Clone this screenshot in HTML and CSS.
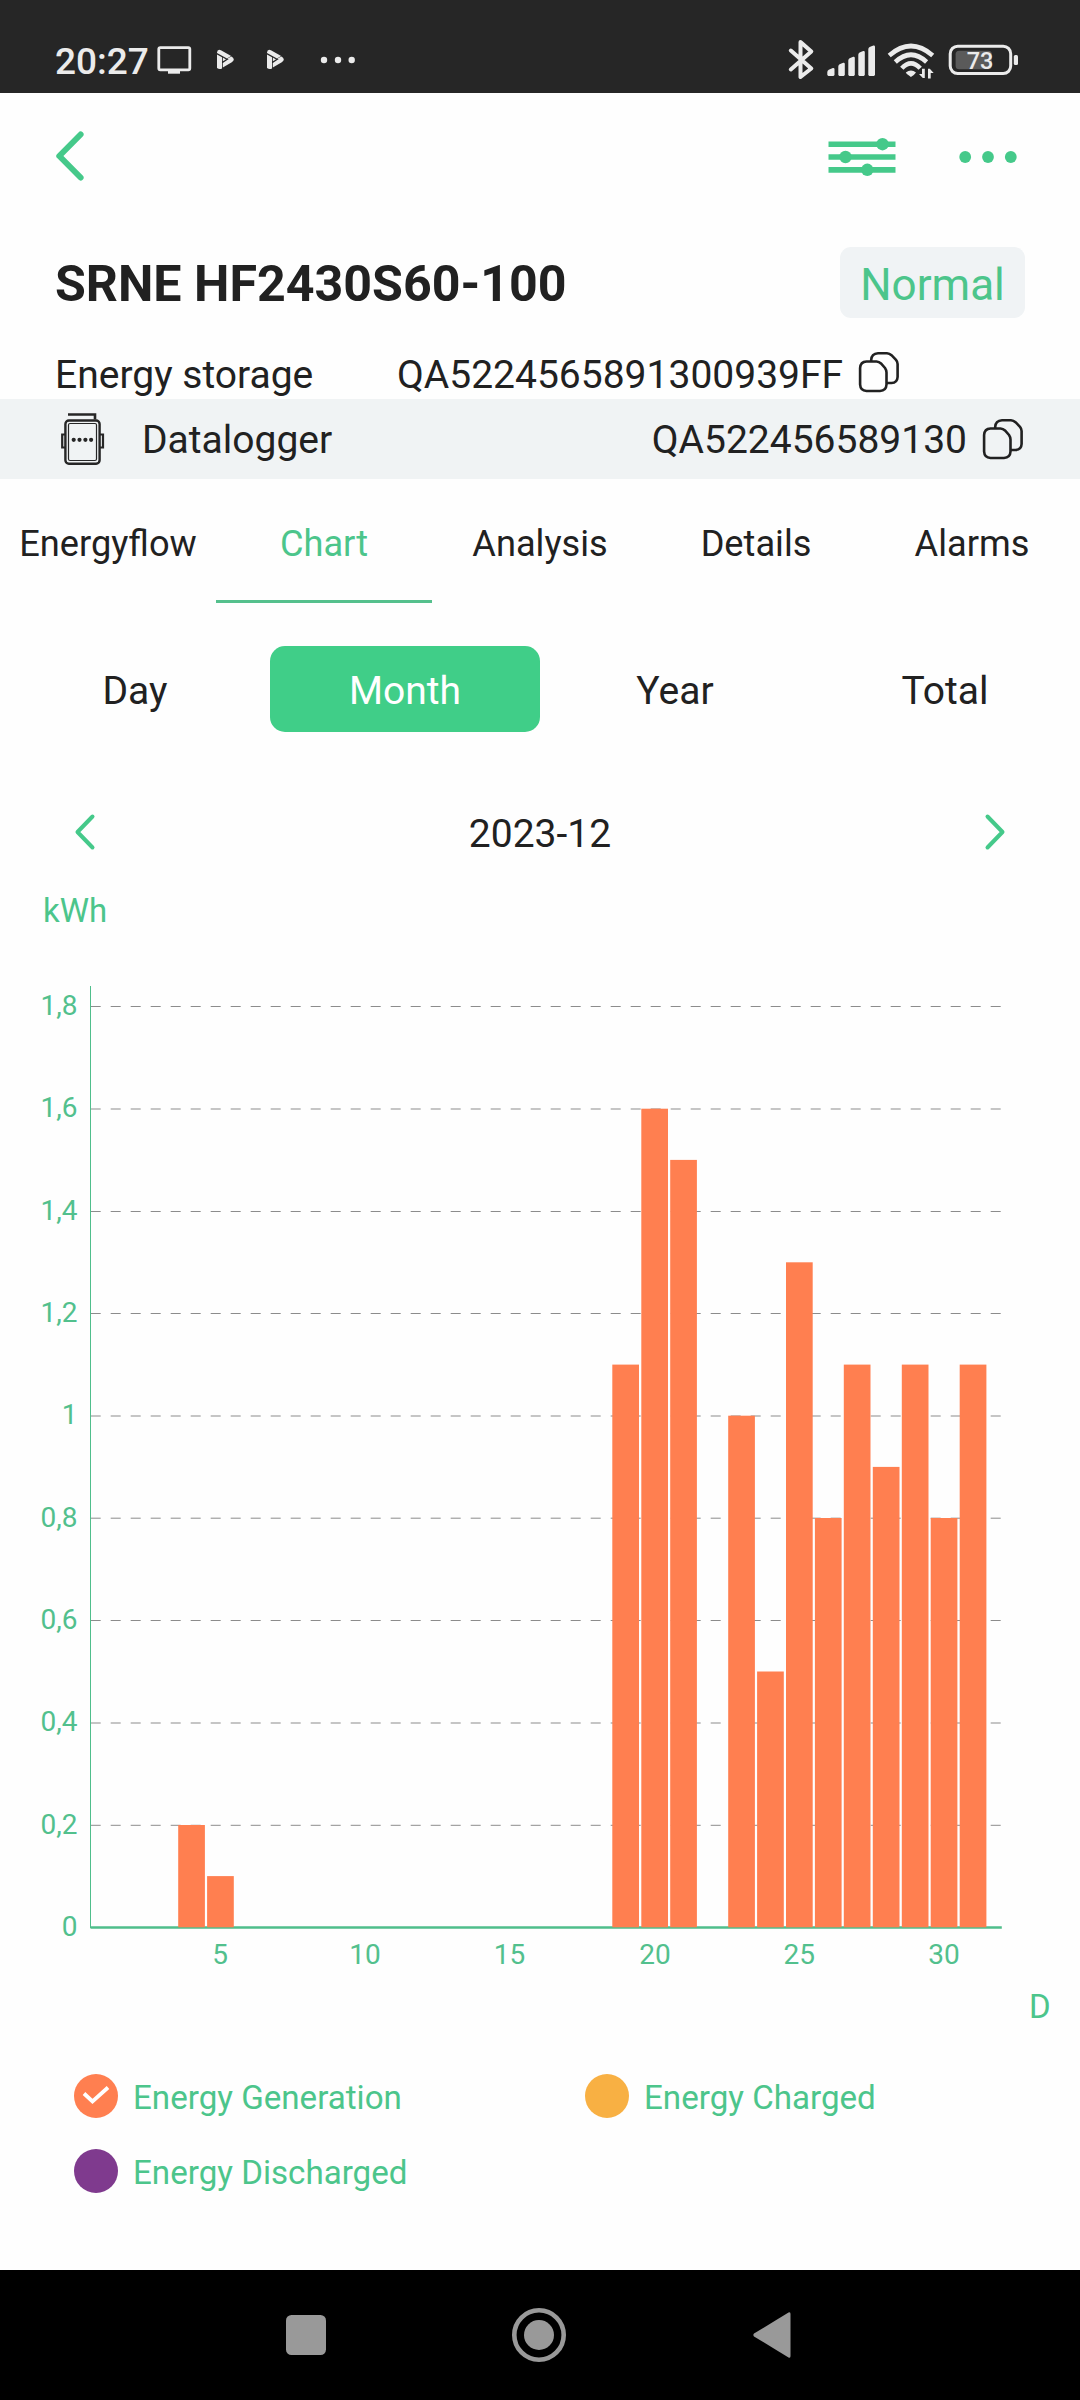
FILE: index.html
```html
<!DOCTYPE html>
<html lang="en">
<head>
<meta charset="utf-8">
<title>SRNE HF2430S60-100</title>
<link rel="stylesheet" href="styles.css">
</head>
<body>
<div class="screen">
  <div class="status">
    <span class="clock">20:27</span>
    <svg class="status-left" width="204" height="40" viewBox="154 40 204 40">
      <rect x="158.800" y="47.600" width="31" height="22.200" rx="1.500" fill="none" stroke="#ebebeb" stroke-width="2.800"/>
      <path d="M168 70h12v3.700h-12z" fill="#ebebeb"/>
      <g id="play" fill="#ebebeb">
        <path d="M217 52.500q.3-3.600 3.900-2.300l10.300 5.900-4.200 2.300-10-5.300z"/>
        <path d="M217 54.500l5 2.700v11.200q-2.500 1.600-5-.4z"/>
        <path d="M231.500 56.600q4.500 3 .3 5.600l-9 5.300v-4.600l6-3.900-1.500-.6z"/>
        <path d="M222.800 57.600l3.200 1.800-3.200 1.900z"/>
      </g>
      <use href="#play" x="50"/>
      <g fill="#ebebeb"><circle cx="324" cy="60" r="3.200"/><circle cx="338" cy="60" r="3.200"/><circle cx="351.700" cy="60" r="3.200"/></g>
    </svg>
    <svg class="status-right" width="240" height="44" viewBox="784 38 240 44">
      <path d="M790.800 50.500L811.300 68.500L800.500 77V42L811.300 51.500L790.800 69.500" fill="none" stroke="#ebebeb" stroke-width="4" stroke-linejoin="round" stroke-linecap="round"/>
      <g fill="#ebebeb">
        <path d="M827.300 72q0-1.500 1.500-2.300l4-1.700q1.700-.3 1.700 1.300V75l-1 1h-5.200l-1-1z"/>
        <path d="M838.300 66.500q0-1.500 1.300-2.200l3.600-1.600q1.600-.3 1.600 1.300V75l-1 1h-4.500l-1-1z"/>
        <path d="M848.300 60.500q0-1.500 1.300-2.200l3.600-1.600q1.600-.3 1.600 1.300V75l-1 1h-4.500l-1-1z"/>
        <path d="M858.300 54.800q0-1.500 1.300-2.200l3.600-1.600q1.600-.3 1.600 1.300V75l-1 1h-4.500l-1-1z"/>
        <path d="M868.300 49.300q0-1.500 1.300-2.200l3.800-1.600q1.600-.3 1.600 1.300V75l-1 1h-4.700l-1-1z"/>
      </g>
      <g fill="none" stroke="#ebebeb" stroke-width="4.600">
        <path d="M889.200 55.500Q911 36.500 932.700 55.500"/>
        <path d="M895.300 62Q911 47.500 926.600 62"/>
        <path d="M901.800 68.300Q911 58.500 920.200 68.300"/>
      </g>
      <path d="M905.800 72.600q5.200-4.400 10.200 0-1 1.800-5.100 4.400-4.200-2.700-5.100-4.400z" fill="#ebebeb"/>
      <path d="M924.800 68.700v9.300h-2l-3.800-4h3v-5.300zM928 78.500v-9.800h1.800l3.900 4.200h-3v5.600z" fill="#ebebeb"/>
      <rect x="950.200" y="46.200" width="60.500" height="27.400" rx="7.500" fill="none" stroke="#ebebeb" stroke-width="3"/>
      <rect x="955.600" y="50.700" width="36.200" height="18.600" rx="3.500" fill="#5a5a5a"/>
      <rect x="1013.800" y="55" width="4.200" height="10" rx="1.500" fill="#ebebeb"/>
      <text x="980" y="68.800" class="battery-text">73</text>
    </svg>
  </div>

  <div class="appbar">
    <svg width="32" height="52" viewBox="54 129.500 32 52"><path d="M80.600 134L59.300 155.500L80.600 177" class="line-green" stroke-width="6"/></svg>
    <div class="appbar-actions">
      <svg width="68" height="40" viewBox="827.500 136.800 68 40" fill="#45c98a">
        <path d="M828 141.200h67v5.600h-67zM828 154h67v5.600h-67zM828 166.900h67v5.600h-67z"/>
        <circle cx="882" cy="144" r="6.200"/><circle cx="845" cy="156.800" r="6.200"/><circle cx="866.800" cy="169.600" r="6.200"/>
      </svg>
      <svg width="58" height="14" viewBox="959 150.300 58 14" fill="#45c98a"><circle cx="965.200" cy="157.300" r="5.900"/><circle cx="988" cy="157.300" r="5.900"/><circle cx="1010.800" cy="157.300" r="5.900"/></svg>
    </div>
  </div>

  <div class="title-row">
    <h1>SRNE HF2430S60-100</h1>
    <span class="badge">Normal</span>
  </div>

  <div class="meta-row">
    <span class="kind">Energy storage</span>
    <span>QA5224565891300939FF</span>
    <svg class="copy" width="42" height="42" viewBox="0 0 42 42">
      <g id="copy"><path d="M13.200 10.500V9Q13.500 2.500 20 2.200H29Q31.500 2.300 33.500 4.200L38 8.800Q39.500 10.500 39.600 13V26Q39.300 31.700 33.500 32H29"/><path d="M8.500 10.500H18.500Q21 10.600 23 12.500L27 17Q28.400 19 28.500 21.500V33.500Q28.200 39.700 22 40H8.500Q2.400 39.700 2.100 33.500V17Q2.400 10.800 8.500 10.500Z"/></g>
    </svg>
  </div>

  <div class="logger">
    <svg width="46" height="54" viewBox="60 411.500 46 54" fill="none" stroke="#262626">
      <rect x="65.400" y="420" width="34.200" height="43.200" rx="3.500" stroke-width="2.400"/>
      <rect x="68.500" y="423" width="28" height="37" rx="1.500" stroke-width="1.200"/>
      <path d="M68 414h27v5" stroke-width="2.600"/>
      <path d="M65 434h-2.800v13h2.800M100 434h3v13h-3" stroke-width="2.200"/>
      <g fill="#262626" stroke="none"><circle cx="73.700" cy="439.300" r="2.100"/><circle cx="79.500" cy="439.300" r="2.100"/><circle cx="85.400" cy="439.300" r="2.100"/><circle cx="91.100" cy="439.300" r="2.100"/></g>
    </svg>
    <span class="logger-name">Datalogger</span>
    <span>QA522456589130</span>
    <svg class="copy" width="42" height="42" viewBox="0 0 42 42"><use href="#copy"/></svg>
  </div>

  <div class="tabs">
    <span>Energyflow</span><span class="active">Chart</span><span>Analysis</span><span>Details</span><span>Alarms</span>
  </div>

  <div class="ranges">
    <span>Day</span><span class="selected">Month</span><span>Year</span><span>Total</span>
  </div>

  <div class="period">
    <svg width="24" height="38" viewBox="0 0 24 38"><path d="M19.500 3.500L4.500 19L19.500 34.500" class="line-green" stroke-width="4"/></svg>
    <span>2023-12</span>
    <svg width="24" height="38" viewBox="0 0 24 38"><path d="M4.500 3.500L19.500 19L4.500 34.500" class="line-green" stroke-width="4"/></svg>
  </div>

  <svg class="chart" width="1080" height="1168" viewBox="0 872 1080 1168">
    <text x="43" y="922" class="unit">kWh</text>
    <text x="1029" y="2018" class="unit">D</text>
    <path class="grid" d="M90.700 1006.500H1002M90.700 1109H1002M90.700 1211.500H1002M90.700 1313.500H1002M90.700 1416H1002M90.700 1518.200H1002M90.700 1620.500H1002M90.700 1723H1002M90.700 1825.300H1002"/>
    <path d="M90.500 986V1928" stroke="#4fbe8b"/>
    <path d="M90.500 1927.500H1001.800" stroke="#4fbe8b" stroke-width="2.300"/>
    <g class="y-labels">
      <text x="77.500" y="1015">1,8</text><text x="77.500" y="1117.300">1,6</text><text x="77.500" y="1219.500">1,4</text><text x="77.500" y="1322">1,2</text><text x="77.500" y="1424.300">1</text><text x="77.500" y="1526.500">0,8</text><text x="77.500" y="1629">0,6</text><text x="77.500" y="1731.300">0,4</text><text x="77.500" y="1833.500">0,2</text><text x="77.500" y="1936">0</text>
    </g>
    <g class="x-labels">
      <text x="220" y="1963.500">5</text><text x="365" y="1963.500">10</text><text x="509.500" y="1963.500">15</text><text x="655" y="1963.500">20</text><text x="799.300" y="1963.500">25</text><text x="944" y="1963.500">30</text>
    </g>
    <g fill="#ff7f50">
      <rect x="178.200" y="1825" width="26.700" height="102.300"/>
      <rect x="207.100" y="1876.100" width="26.700" height="51.200"/>
      <rect x="612.300" y="1364.600" width="26.700" height="562.700"/>
      <rect x="641.300" y="1108.700" width="26.700" height="818.600"/>
      <rect x="670.200" y="1159.900" width="26.700" height="767.400"/>
      <rect x="728.200" y="1415.700" width="26.700" height="511.600"/>
      <rect x="757.100" y="1671.500" width="26.700" height="255.800"/>
      <rect x="786" y="1262.300" width="26.700" height="665"/>
      <rect x="814.900" y="1518" width="26.700" height="409.300"/>
      <rect x="843.800" y="1364.600" width="26.700" height="562.700"/>
      <rect x="872.800" y="1466.900" width="26.700" height="460.400"/>
      <rect x="901.800" y="1364.600" width="26.700" height="562.700"/>
      <rect x="930.700" y="1518" width="26.700" height="409.300"/>
      <rect x="959.700" y="1364.600" width="26.700" height="562.700"/>
    </g>
  </svg>

  <div class="legend">
    <div class="item"><span class="dot generation"><svg width="44" height="44" viewBox="0 0 44 44"><path d="M10 19.500L18.500 27.500L34 13.500" fill="none" stroke="#fff" stroke-width="3.800"/></svg></span><span class="label">Energy Generation</span></div>
    <div class="item"><span class="dot charged"></span><span class="label">Energy Charged</span></div>
    <div class="item"><span class="dot discharged"></span><span class="label">Energy Discharged</span></div>
  </div>

  <div class="nav">
    <svg width="40" height="40" viewBox="0 0 40 40"><rect width="40" height="40" rx="5.500" fill="#999"/></svg>
    <svg width="56" height="56" viewBox="0 0 56 56"><circle cx="28" cy="28" r="24.700" fill="none" stroke="#999" stroke-width="4.600"/><circle cx="28" cy="28" r="15" fill="#999"/></svg>
    <svg width="38" height="46" viewBox="0 0 38 46"><path d="M35.500 .600Q37.500-.500 37.500 2V44Q37.500 46.500 35.500 45.400L1 24.500Q-.300 23 1 21.500Z" fill="#999"/></svg>
  </div>
</div>
</body>
</html>
```
FILE: styles.css
```css
body { margin: 0; background: #fefefe; }
.screen {
  width: 1080px; height: 2400px; overflow: hidden;
  display: flex; flex-direction: column;
  font-family: Roboto, "Liberation Sans", sans-serif;
  font-size: 39px; color: #212121; background: #fefefe;
  white-space: nowrap;
}
.screen > * { flex: none; box-sizing: border-box; }
svg { display: block; flex: none; }

.status { height: 93px; background: #262626; display: flex; align-items: center; padding: 27px 56px 0 55px; }
.clock { color: #ebebeb; font-size: 37px; font-weight: 500; line-height: 66px; width: 99px; padding-top: 4px; }
.status-right { margin-left: auto; }
.battery-text { font-size: 23.500px; font-weight: 500; fill: #ebebeb; text-anchor: middle; }

.line-green { fill: none; stroke: #45c98a; stroke-linecap: round; stroke-linejoin: round; }
.appbar { height: 125px; padding: 0 63px 0 54px; display: flex; align-items: center; justify-content: space-between; }
.appbar-actions { display: flex; align-items: center; gap: 63.500px; padding-top: 3px; }

.title-row { height: 71px; margin-top: 29px; padding: 0 55px; display: flex; align-items: center; justify-content: space-between; }
h1 { margin: 0; padding-top: 2px; font-size: 50.150px; font-weight: 700; line-height: 69px; }
.badge { width: 185px; height: 71px; box-sizing: border-box; padding-top: 5px; line-height: 66px; border-radius: 11px; background: #f0f3f5; color: #4cc58b; font-size: 44px; text-align: center; }

.meta-row { height: 48px; margin-top: 33px; padding-left: 55px; display: flex; line-height: 48px; }
.kind { width: 342px; }
.copy { fill: none; stroke: #212121; stroke-width: 2.600; }
.meta-row .copy { margin-left: 15px; }
.logger { height: 80px; padding: 0 56px 0 60px; display: flex; align-items: center; background: #f0f3f4; }
.logger span { padding-top: 2px; }
.logger-name { margin: 0 auto 0 36px; }
.logger .copy { margin-left: 15px; }

.tabs { height: 124px; display: grid; grid-template-columns: repeat(5, 1fr); font-size: 36.200px; text-align: center; }
.tabs span { padding-top: 8px; line-height: 113px; border-bottom: 3px solid transparent; }
.tabs .active { color: #4cc58b; border-color: #55c08d; }

.ranges { height: 86px; margin-top: 43px; display: grid; grid-template-columns: repeat(4, 1fr); text-align: center; }
.ranges span { padding-top: 4px; line-height: 82px; border-radius: 15px; }
.ranges .selected { background: #40ce88; color: #fff; }

.period { height: 80px; margin-top: 60px; padding: 0 73px; display: flex; align-items: center; justify-content: space-between; }
.period span { padding-top: 4px; }

.unit { font-size: 33px; fill: #4cc58b; }
.grid { stroke: #8c8c8c; stroke-width: 1; stroke-dasharray: 10 10; }
.y-labels, .x-labels { font-size: 28px; fill: #52c08d; }
.y-labels { text-anchor: end; }
.x-labels { text-anchor: middle; }

.legend { height: 230px; padding: 18px 0 0 74px; display: grid; grid-template-columns: 511px 1fr; grid-auto-rows: 75px; color: #4cc58b; font-size: 33.150px; }
.item { display: flex; align-items: center; }
.dot { width: 44px; height: 44px; border-radius: 50%; margin-right: 15px; }
.label { padding-top: 4px; }
.generation { background: #ff7f50; }
.charged { background: #f8b043; }
.discharged { background: #7f3a8e; }

.nav { height: 130px; padding-left: 286px; background: #000; display: flex; align-items: center; }
.nav svg:nth-child(2) { margin-left: 185px; }
.nav svg:nth-child(3) { margin-left: 186px; }
```
